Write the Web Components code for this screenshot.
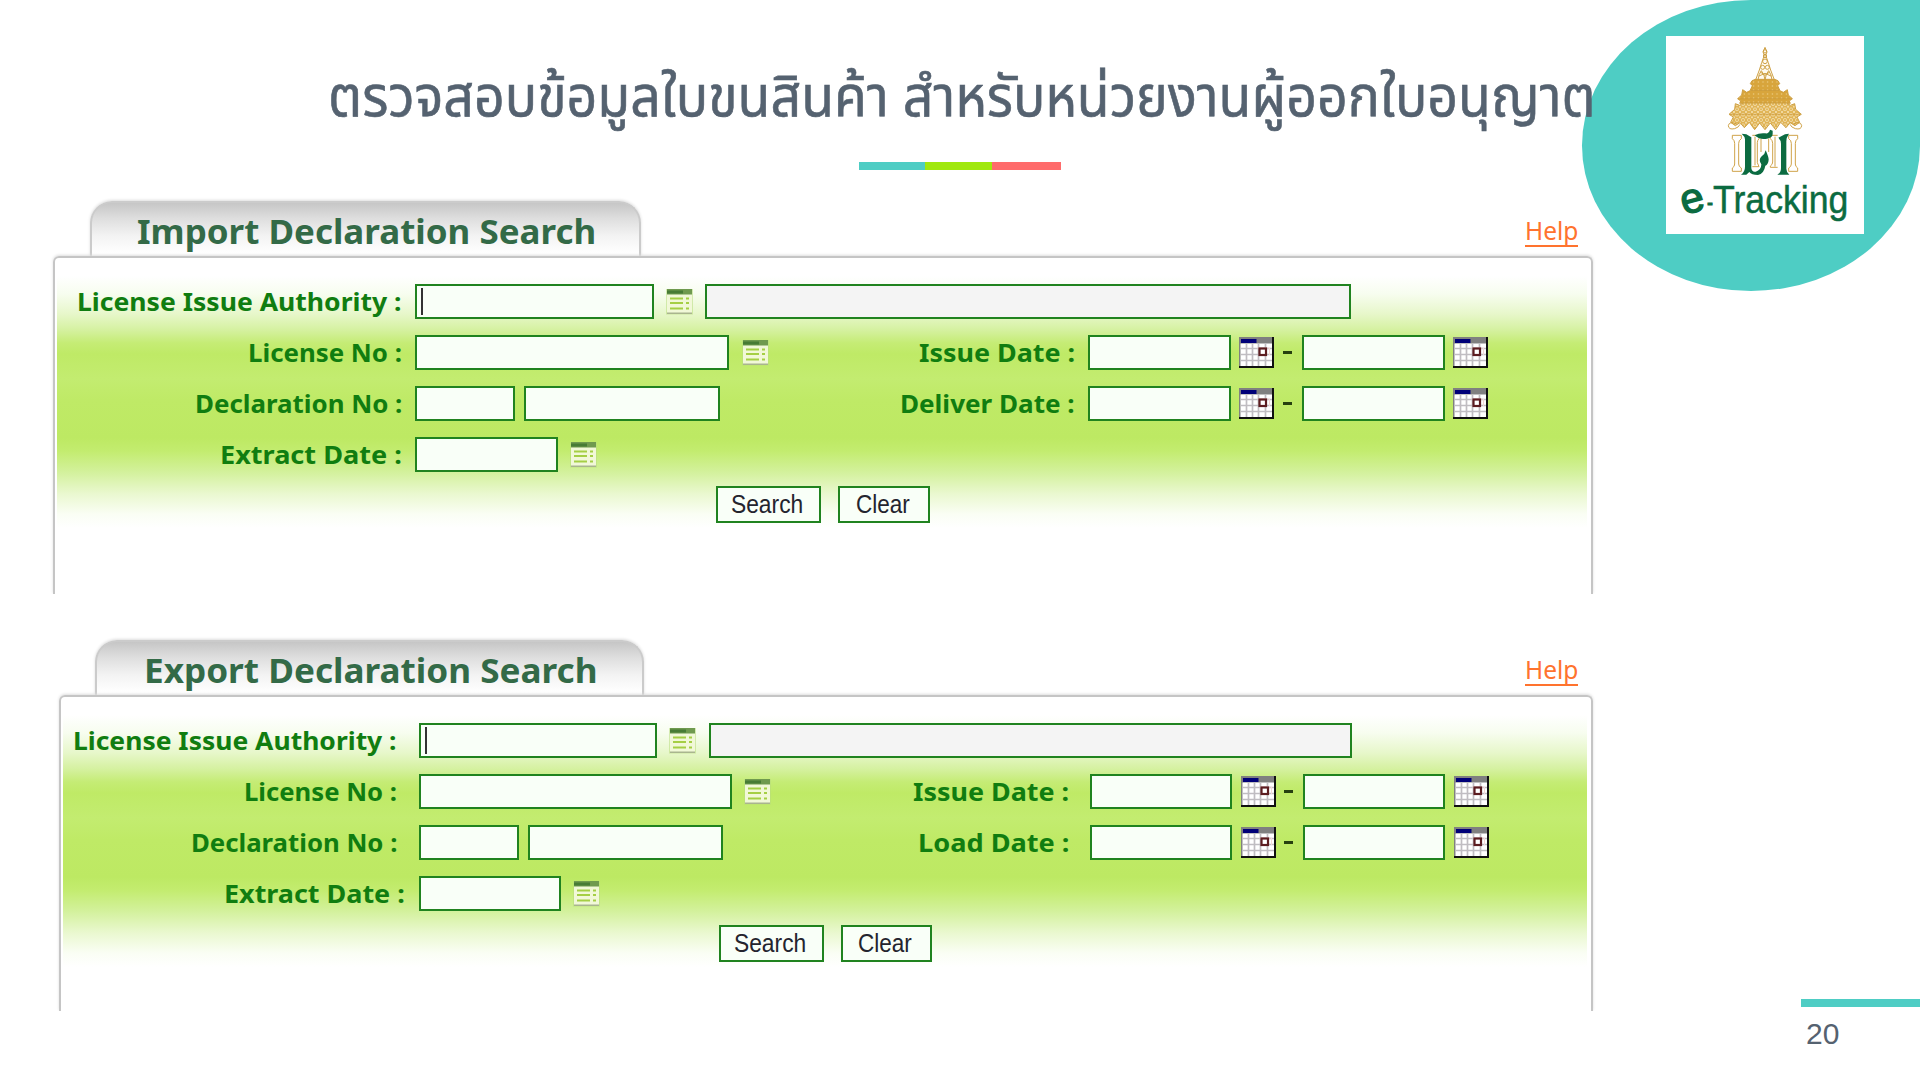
<!DOCTYPE html>
<html lang="th">
<head>
<meta charset="utf-8">
<title>e-Tracking</title>
<style>
html,body{margin:0;padding:0;background:#fff}
body{width:1920px;height:1080px;overflow:hidden;font-family:"Noto Sans","Liberation Sans",sans-serif}
</style>
</head>
<body>
<slide-page></slide-page>
<script>
const define = (name, html, setup) => customElements.define(name, class extends HTMLElement {
  connectedCallback() {
    if (this.shadowRoot) return;
    const root = this.attachShadow({ mode: 'open' });
    const t = document.createElement('template');
    t.innerHTML = typeof html === 'function' ? html(this) : html;
    root.appendChild(t.content.cloneNode(true));
    if (setup) setup(this, root);
  }
});

// Single line of text stretched horizontally to the width in the "w" attribute.
define('fit-text', `<style>
  :host{display:block;flex:none;white-space:nowrap;line-height:1}
  span{display:inline-block;transform-origin:0 50%;white-space:nowrap}
</style><span></span>`, (el, root) => {
  const s = root.querySelector('span'), w = +el.getAttribute('w');
  s.textContent = el.getAttribute('text');
  el.style.width = w + 'px';
  s.style.transform = `scaleX(${w / s.offsetWidth})`;
});

define('text-box', el => `<style>
  :host{display:block;flex:none;box-sizing:border-box;height:34.5px;width:${el.getAttribute('w')}px;
    border:2px solid #20831f;background:${el.hasAttribute('readonly') ? '#f4f4f4' : '#f9fff8'};padding:2px 0 0 4px}
  i{display:block;width:2px;height:27px;background:#333}
</style>${el.hasAttribute('caret') ? '<i></i>' : ''}`);

define('list-icon', `<style>:host{display:block;flex:none;width:27px;height:27px}svg{display:block}</style>
<svg width="27" height="27" viewBox="0 0 27 27">
  <rect x="0" y="1" width="27" height="25.500" fill="#b8dc7e" opacity=".55"/>
  <rect x="1" y="6" width="25" height="19" fill="#f1f8d8"/>
  <rect x="1" y="24.500" width="25" height="1.500" fill="#a9b58e"/>
  <rect x="1" y="1" width="25" height="5.500" fill="#6f9a4f"/>
  <rect x="1" y="2.500" width="16" height="3" fill="#477b35"/>
  <path d="M4 10.500h13M4 15h13M4 20.500h13" stroke="#a5cf45" stroke-width="2.200"/>
  <path d="M20 10.500h3M20 15h3M20 20.500h3" stroke="#a5cf45" stroke-width="2.200"/>
</svg>`);

define('calendar-icon', `<style>:host{display:block;flex:none;width:35px;height:31px}svg{display:block}</style>
<svg width="35" height="31" viewBox="0 0 35 31">
  <rect width="35" height="31" fill="#808080"/>
  <rect x="1.500" y="6.500" width="32" height="23" fill="#fff"/>
  <rect x="2" y="2" width="15.500" height="4" fill="#000078"/>
  <path d="M2 11.500h31M2 17.500h31M2 23.500h31M7.500 6.500v23M13.500 6.500v23M19.500 6.500v23M26.500 6.500v23" stroke="#c0bdc2" stroke-width="1.700"/>
  <path d="M18.500 11h12v7" stroke="#f3d9d6" fill="none"/>
  <rect x="20.500" y="11.500" width="6.500" height="6.500" fill="#fff" stroke="#5c1c20" stroke-width="2.200"/>
  <path d="M34 0v30H0" fill="none" stroke="#111" stroke-width="2"/>
</svg>`);

define('push-button', el => `<style>
  :host{display:flex;flex:none;box-sizing:border-box;width:${el.getAttribute('w')}px;height:36.500px;border:2px solid #20831f;
    background:#f9fff8;color:#24242e;font:25px "Liberation Sans",sans-serif;align-items:center;justify-content:center;padding-right:3px}
</style><slot></slot>`);

define('form-label', el => `<style>
  :host{display:flex;flex:none;justify-content:flex-end;width:${el.getAttribute('end')}px;
    color:#107d10;font:bold 25px "Noto Sans",sans-serif}
</style><fit-text w="${el.getAttribute('w')}" text="${el.getAttribute('text')}"></fit-text>`);

define('range-dash', `<style>:host{display:block;flex:none;width:9px;height:2.500px;background:#26400f}</style>`);

const gap = n => `style="margin-left:${n}px"`;

// d holds the horizontal metrics of one form.
const forms = {
  import: { title: 'Import Declaration Search', left: 53, tab: [37, 551], titleAt: [45, 459],
    labelEnd: 347, labels: [325, 154, 207, 182], toBox: 13, extractShift: 0, box: [239, 314, 100, 196, 142.5],
    readonly: 645.5, ro: 12, dateLabel: ['Deliver Date :', 175], issueEnd: 1075, dateX: 1088, d: [143, 8, 8.5, 10, 143, 8],
    btn: [663, 105, 17, 92] },
  export: { title: 'Export Declaration Search', left: 58.5, tab: [36.5, 549], titleAt: [46.5, 454],
    labelEnd: 336.5, labels: [324, 153, 206, 181], toBox: 21.5, extractShift: 8, box: [238.500, 313, 100, 195.500, 142],
    readonly: 643, ro: 12.5, dateLabel: ['Load Date :', 151], issueEnd: 1068.5, dateX: 1090, d: [142, 8.500, 8.500, 10, 142, 8.500],
    btn: [660.5, 104.500, 17, 91.500] }
};

define('search-panel', el => {
  const f = forms[el.getAttribute('kind')];
  const start = f.left + 2;
  const boxX = start + f.labelEnd + f.toBox;
  const dates = (from, text, w) => `
    <form-label end="${f.issueEnd - from}" w="${w}" text="${text}"></form-label>
    <text-box w="${f.d[0]}" ${gap(f.dateX - f.issueEnd)}></text-box>
    <calendar-icon ${gap(f.d[1])}></calendar-icon>
    <range-dash ${gap(f.d[2])}></range-dash>
    <text-box w="${f.d[4]}" ${gap(f.d[3])}></text-box>
    <calendar-icon ${gap(f.d[5])}></calendar-icon>`;
  return `<style>
  :host{display:block;width:${1593 - f.left}px;margin-left:${f.left}px}
  header{display:flex;align-items:flex-start;height:55px}
  .tab{box-sizing:border-box;width:${f.tab[1]}px;height:57px;margin-left:${f.tab[0]}px;padding:12px 0 0 ${f.titleAt[0]}px;
    border:2px solid #cbcbcb;border-bottom:0;border-radius:22px 22px 0 0;
    background:linear-gradient(#c6c6c6,#dedede 28%,#f3f3f3 60%,#fff 92%);box-shadow:0 -1px 3px #ddd;
    color:#336a47;font:bold 33.5px "Noto Sans",sans-serif;position:relative;clip-path:inset(-5px -5px 0 -5px)}
  .help{margin:13px 15.5px 0 auto;color:#ff732e;font:25px "Noto Sans",sans-serif;border-bottom:2px solid #ff732e;padding-top:4px;height:27px}
  .body{box-sizing:border-box;height:${el.getAttribute('h')}px;border:2px solid #c5c5c5;border-bottom:0;border-radius:6px 6px 0 0;
    box-shadow:0 -1px 3px #ddd;clip-path:inset(-5px -6px 0 -5px);padding:18px 4px 0 2px}
  .wash{height:252px;background:linear-gradient(#fff 0,#f7fdef 18px,#e7f7ca 38px,#d5f1a0 54px,#c5ec75 67px,#bfea66 78px,#c3ec70 103px,#bfea66 125px,#bde963 162px,#c3ec6f 175px,#d3f19c 196px,#eaf8d0 218px,#fafef4 238px,#fff 252px);
    display:flex;flex-direction:column;align-items:flex-start;padding-top:8px;box-sizing:border-box}
  .row{display:flex;align-items:center;height:34.5px;margin-bottom:16.5px;margin-left:-2px}
  .btns{display:flex;margin:-2px 0 0 ${f.btn[0] - 4}px}
  </style>
  <header>
    <div class="tab"><fit-text w="${f.titleAt[1]}" text="${f.title}"></fit-text></div>
    <div class="help"><fit-text w="53" text="Help"></fit-text></div>
  </header>
  <div class="body"><div class="wash">
    <div class="row">
      <form-label end="${f.labelEnd}" w="${f.labels[0]}" text="License Issue Authority :"></form-label>
      <text-box caret w="${f.box[0]}" ${gap(f.toBox)}></text-box>
      <list-icon ${gap(12)}></list-icon>
      <text-box readonly w="${f.readonly}" ${gap(f.ro)}></text-box>
    </div>
    <div class="row">
      <form-label end="${f.labelEnd}" w="${f.labels[1]}" text="License No :"></form-label>
      <text-box w="${f.box[1]}" ${gap(f.toBox)}></text-box>
      <list-icon ${gap(12.500)}></list-icon>
      ${dates(boxX + f.box[1] + 39.5, 'Issue Date :', 156)}
    </div>
    <div class="row">
      <form-label end="${f.labelEnd}" w="${f.labels[2]}" text="Declaration No :"></form-label>
      <text-box w="${f.box[2]}" ${gap(f.toBox)}></text-box>
      <text-box w="${f.box[3]}" ${gap(9)}></text-box>
      ${dates(boxX + f.box[2] + f.box[3] + 9, ...f.dateLabel)}
    </div>
    <div class="row">
      <form-label end="${f.labelEnd + f.extractShift}" w="${f.labels[3]}" text="Extract Date :"></form-label>
      <text-box w="${f.box[4]}" ${gap(f.toBox - f.extractShift)}></text-box>
      <list-icon ${gap(12.500)}></list-icon>
    </div>
    <div class="btns">
      <push-button w="${f.btn[1]}"><fit-text w="72" text="Search"></fit-text></push-button>
      <push-button w="${f.btn[3]}" ${gap(f.btn[2])}><fit-text w="54" text="Clear"></fit-text></push-button>
    </div>
  </div></div>`;
});

define('brand-badge', `<style>
  :host{display:flex;box-sizing:border-box;width:338px;height:291px;padding:36px 0 0 84px;background:#4ecdc4;border-radius:50% 0 50% 50%}
  svg{display:block;background:#fff}
</style>
<svg width="198" height="198" viewBox="318 108 594 594">
  <defs>
    <pattern id="lace" width="18" height="16" patternUnits="userSpaceOnUse">
      <rect width="18" height="16" fill="#e0b354"/><circle cx="9" cy="8" r="4.500" fill="none" stroke="#fbeccb" stroke-width="2"/>
      <path d="M0 0l3 3M18 0l-3 3M0 16l3-3M18 16l-3-3" stroke="#fbeccb" stroke-width="2"/>
    </pattern>
    <pattern id="dense" width="14" height="12" patternUnits="userSpaceOnUse">
      <rect width="14" height="12" fill="#d8a53c"/><circle cx="7" cy="6" r="2" fill="#efd08a"/>
    </pattern>
  </defs>
  <g stroke="#cb9c3c" stroke-width="2.800" fill="none">
    <path d="M615 142l-6 14 4 10-8 22-7 22-12 32h58l-12-32-7-22-8-22 4-10z" fill="#fffaf0"/>
    <circle cx="615" cy="154" r="5"/><circle cx="615" cy="168" r="5"/><circle cx="615" cy="184" r="7"/>
    <circle cx="608" cy="202" r="6"/><circle cx="622" cy="202" r="6"/>
    <path d="M594 240q2-18 10-28q10 12 11 28q2-18 11-28q9 12 10 28M601 216l14 10 14-10M597 228l18-8 18 8"/>
    <path d="M576 242l10-4h58l10 4 5 9-6 6 6 13-12 3h-64l-12-3 6-13-6-6z" fill="url(#dense)"/>
    <path d="M548 269l12 8 12-6h86l12 6 12-8 3 16 12 11-9 7 3 7H539l3-7-9-7 12-11z" fill="url(#dense)"/>
    <path d="M526 311l13 5 10-7h132l10 7 13-5 3 17 17 15-13 8 8 16-14 10-15-9-12 15-16-16-15 22-16-20-16 20-16-20-15 20-16-22-15 16-13-15-14 9-14-10 8-16-13-8 17-15z" fill="url(#lace)"/>
    <path d="M530 372q-22-10-25 5q1 13 19 9q13-4 16-13M700 372q22-10 25 5q-1 13-19 9q-13-4-16-13"/>
    <path d="M510 343h210M533 296h164" stroke-width="2"/>
    <path d="M517 406h27v10q-8 5-8 14v62q0 8 8 12v10h-27v-10q7-4 7-12v-62q0-9-7-14zM713 406h-27v10q8 5 8 14v62q0 8-8 12v10h27v-10q-7-4-7-12v-62q0-9 7-14z"/>
    <path d="M577 406h20v10q-5 5-5 12v60l5 12h-20M653 406h-22v10q7 5 7 14v56q0 8-7 12v4h22M603 416v40M626 416v40M645 410v90M585 410v86"/>
  </g>
  <g fill="#0b6b41">
    <path d="M545 401l14 2 15 9v93q2 12 13 10q17-5 17-22q-10-14 1-24q10-6 12-18q9 20 9 28q-1 14-10 18q-4 24-22 28q-20 0-26-9l-9 8h-16q12-9 12-24v-82q0-8-10-17z"/>
    <path d="M687 401l-12 2-20 10q8 8 8 18v73q0 15-11 20h36q-9-7-9-18V424q0-12 8-23z"/>
    <path d="M584 406q14-8 32-6q10 2 14-11l8 3v10q0 11-17 14q-23 4-37-10z"/>
  </g>
  <g font-family="Liberation Sans" fill="#0b6b41" stroke="#0b6b41">
    <text transform="translate(372 645) rotate(-15)" font-size="126" stroke-width="4">e</text>
    <text x="441" y="631" font-size="72" stroke-width="3" textLength="18" lengthAdjust="spacingAndGlyphs">-</text>
    <text x="459" y="640" font-size="119" stroke-width="1.500" textLength="406" lengthAdjust="spacingAndGlyphs">Tracking</text>
  </g>
</svg>`);

define('slide-page', `<style>
  :host{display:block;width:1920px;height:1080px;background:#fff;overflow:hidden;position:relative}
  brand-badge{position:absolute;right:0;top:0}
  .top{display:flex;flex-direction:column;height:201px;position:relative;box-sizing:border-box;padding:71px 0 0 328px}
  h1{margin:0;height:91px;font:57px/84px "Noto Sans Thai","Noto Sans",sans-serif;color:#556270;-webkit-text-stroke:.6px #556270}
  .bar{display:flex;height:8px;margin-left:531px}
  .bar i{height:8px}
  .forms{display:flex;flex-direction:column;gap:46px}
  .page{position:absolute;right:0;top:999px;width:119px;border-top:8px solid #4ecdc4;box-sizing:border-box;padding:10px 0 0 5px;
    color:#556270;font:30px "Liberation Sans",sans-serif}
</style>
<brand-badge></brand-badge>
<div class="top">
  <h1><fit-text w="1268" text="ตรวจสอบข้อมูลใบขนสินค้า สำหรับหน่วยงานผู้ออกใบอนุญาต"></fit-text></h1>
  <div class="bar"><i style="width:66px;background:#4ecdc4"></i><i style="width:67px;background:#a0e80e"></i><i style="width:69px;background:#ff6b6b"></i></div>
</div>
<div class="forms">
  <search-panel kind="import" h="338"></search-panel>
  <search-panel kind="export" h="316"></search-panel>
</div>
<div class="page">20</div>`);
</script>
</body>
</html>
